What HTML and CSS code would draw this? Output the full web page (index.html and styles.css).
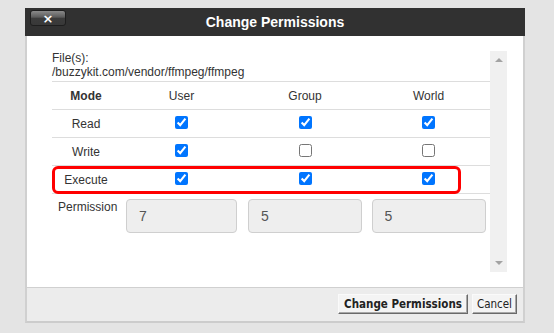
FILE: index.html
```html
<!DOCTYPE html>
<html lang="en">

<head>
  <meta charset="UTF-8">
  <meta name="viewport" content="width=device-width, initial-scale=1.0">
  <title>Change Permissions</title>

  <link rel="stylesheet" href="styles.css">
</head>

<body>
  <div class="dialog">
    <div class="titlebar">
      <button class="close">&times;</button>
      <span class="title">Change Permissions</span>
    </div>
    <div class="body">
      <div class="scroller">
        <div class="content">
          <div class="file">File(s):<br>/buzzykit.com/vendor/ffmpeg/ffmpeg</div>
          <div class="row head">
            <div class="cell mode">Mode</div>
            <div class="cell">User</div>
            <div class="cell">Group</div>
            <div class="cell">World</div>
          </div>
          <div class="row">
            <div class="cell">Read</div>
            <div class="cell"><input type="checkbox" checked></div>
            <div class="cell"><input type="checkbox" checked></div>
            <div class="cell"><input type="checkbox" checked></div>
          </div>
          <div class="row">
            <div class="cell">Write</div>
            <div class="cell"><input type="checkbox" checked></div>
            <div class="cell"><input type="checkbox"></div>
            <div class="cell"><input type="checkbox"></div>
          </div>
          <div class="row marked">
            <div class="cell">Execute</div>
            <div class="cell"><input type="checkbox" checked></div>
            <div class="cell"><input type="checkbox" checked></div>
            <div class="cell"><input type="checkbox" checked></div>
            <span class="highlight"></span>
          </div>
          <div class="row perm">
            <div class="label">Permission</div>
            <input class="num first" type="text" value="7" readonly>
            <input class="num" type="text" value="5" readonly>
            <input class="num" type="text" value="5" readonly>
          </div>
        </div>
        <div class="scrollbar">
          <span class="arrow up"></span>
          <span class="arrow down"></span>
        </div>
      </div>
    </div>
    <div class="footer">
      <button class="btn primary">Change Permissions</button>
      <button class="btn">Cancel</button>
    </div>
  </div>
</body>

</html>
```

FILE: styles.css
```css
* {
  box-sizing: border-box;
}

body {
  margin: 0;
  background-color: #e4e4e4;
  font-family: "Liberation Sans", Arial, sans-serif;
  font-size: 12px;
  color: #333;
}

.dialog {
  width: 500px;
  margin: 8px 0 0 25px;
  background-color: #fff;
}

.titlebar {
  display: grid;
  grid-template-columns: 1fr auto 1fr;
  height: 28px;
  background-color: #313131;
}

.titlebar .close {
  justify-self: start;
  width: 36px;
  height: 16px;
  margin: 2px 0 0 5px;
  padding: 0;
  border: 1px solid #1e1e1e;
  border-radius: 3px;
  background: linear-gradient(#8a8a8a, #5a5a5a 45%, #3c3c3c 50%, #383838);
  color: #fff;
  font-family: "DejaVu Sans", sans-serif;
  font-size: 13px;
  font-weight: bold;
  line-height: 13px;
}

.titlebar .title {
  align-self: center;
  color: #fff;
  font-size: 14px;
  font-weight: bold;
}

.body {
  padding: 15px 15px 15px 25px;
  border-left: 2px solid #d0d0d0;
  border-right: 2px solid #d0d0d0;
}

.scroller {
  display: flex;
  height: 221px;
}

.content {
  width: 438px;
}

.file {
  height: 31px;
  line-height: 14px;
  border-bottom: 1px solid #dddddd;
}

.row {
  position: relative;
  display: grid;
  grid-template-columns: 68px 123px 124px 123px;
  height: 28px;
  border-bottom: 1px solid #dddddd;
}

.row .cell {
  display: flex;
  align-items: center;
  justify-content: center;
}

.row .cell.mode {
  font-weight: bold;
}

.row input[type="checkbox"] {
  width: 13px;
  height: 13px;
  margin: 0 0 3px 0;
}

.row .highlight {
  position: absolute;
  top: 0;
  left: 0;
  width: 409px;
  height: 28px;
  border: 3px solid #f00;
  border-radius: 6px;
}

.row.perm {
  height: auto;
  border-bottom: none;
}

.row.perm .label {
  padding: 6px 0 0 6px;
  line-height: 14px;
}

.row.perm .num {
  justify-self: center;
  width: 114px;
  height: 34px;
  margin-top: 5px;
  padding: 0 12px;
  border: 1px solid #cfcfcf;
  border-radius: 4px;
  background-color: #eeeeee;
  color: #555;
  font-family: "Liberation Sans", Arial, sans-serif;
  font-size: 14px;
  outline: none;
}

.row.perm .num.first {
  width: 111px;
}

.scrollbar {
  display: flex;
  flex-direction: column;
  justify-content: space-between;
  align-items: center;
  width: 17px;
  padding: 7px 0;
  background-color: #f0f0f0;
}

.arrow {
  width: 0;
  height: 0;
  border-left: 4px solid transparent;
  border-right: 4px solid transparent;
}

.arrow.up {
  border-bottom: 4px solid #a3a3a3;
}

.arrow.down {
  border-top: 4px solid #a3a3a3;
}

.footer {
  display: flex;
  justify-content: flex-end;
  gap: 4px;
  height: 36px;
  padding: 6px 6px 0 0;
  border-top: 1px solid #d0d0d0;
  border-left: 2px solid #d0d0d0;
  border-right: 2px solid #d0d0d0;
  border-bottom: 2px solid #cccccc;
  background-color: #ececec;
}

.btn {
  height: 20px;
  padding: 0 4px;
  border: 1px solid;
  border-color: #fafafa #6a6a6a #6a6a6a #fafafa;
  box-shadow: inset -1px -1px #a8a8a8;
  background-color: #f4f4f4;
  color: #222;
  font-family: "DejaVu Sans Condensed", "DejaVu Sans", sans-serif;
  font-stretch: condensed;
  font-size: 11.5px;
  cursor: pointer;
}

.btn.primary {
  padding: 0 5px;
  font-weight: bold;
}
```
